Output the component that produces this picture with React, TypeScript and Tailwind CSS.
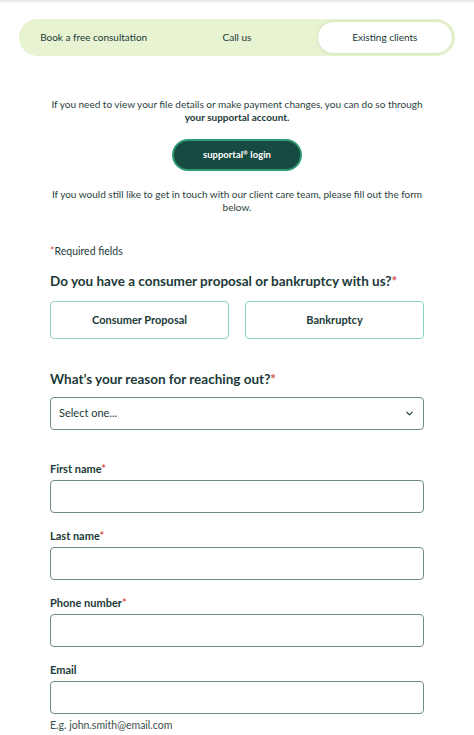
import { ChevronDown } from 'lucide-react'

function Field({ label, required, hint }: { label: string; required?: boolean; hint?: string }) {
  return (
    <div className="flex flex-col">
      <label className="text-[11px] font-bold text-[#1b3a39] leading-[14px] mb-[4px]">
        {label}
        {required && <span className="text-[#d9534f]">*</span>}
      </label>
      <input className="h-[33px] w-full rounded-[4px] border border-[#6f8c88] bg-white outline-none" />
      {hint && <div className="mt-[5px] text-[10.5px] leading-[12px] text-[#3c4f4d]">{hint}</div>}
    </div>
  )
}

export default function App() {
  return (
    <div
      className="min-h-[735px] w-[474px] bg-white text-[#1b3a39]"
      style={{ fontFamily: 'Lato, "Noto Sans", sans-serif' }}
    >
      <div className="h-[3px] bg-gradient-to-b from-[#e2e2e2] to-white" />

      {/* Tabs */}
      <div className="px-[19px] pt-[16px]">
        <div className="grid h-[37px] grid-cols-3 items-center rounded-full bg-[#e8f3d1] px-[3px]">
          <div className="text-center text-[10px]">Book a free consultation</div>
          <div className="text-center text-[10px]">Call us</div>
          <div className="ml-[9px] flex h-[31px] items-center justify-center rounded-full bg-white text-[10px] shadow-[0_0_3px_rgba(180,200,140,0.7)]">
            Existing clients
          </div>
        </div>
      </div>

      <div className="mt-[42px] px-[50px] text-center text-[10px] leading-[13px] text-[#2a3f3e]">
        If you need to view your file details or make payment changes, you can do so through{' '}
        <span className="font-bold text-[#1b3a39]">your supportal account.</span>
      </div>

      <div className="mt-[15px] flex justify-center">
        <button className="h-[32px] w-[130px] rounded-full border-2 border-[#2f9a73] bg-[#174a40] text-[9.5px] font-bold text-white">
          supportal<sup className="text-[6px]">®</sup> login
        </button>
      </div>

      <div className="mt-[17px] px-[46px] text-center text-[10px] leading-[13px] text-[#2a3f3e]">
        If you would still like to get in touch with our client care team, please fill out the form below.
      </div>

      <div className="px-[50px]">
        <div className="mt-[31px] text-[10.5px] leading-[12px]">
          <span className="text-[#d9534f]">*</span>Required fields
        </div>

        <h2 className="mt-[15px] text-[13.5px] font-bold leading-[18px]">
          Do you have a consumer proposal or bankruptcy with us?<span className="text-[#d9534f]">*</span>
        </h2>

        <div className="mt-[11px] grid grid-cols-2 gap-[16px]">
          <button className="h-[38px] rounded-[4px] border border-[#8ad6be] text-[11px] font-bold">
            Consumer Proposal
          </button>
          <button className="h-[38px] rounded-[4px] border border-[#8ad6be] text-[11px] font-bold">
            Bankruptcy
          </button>
        </div>

        <h2 className="mt-[31px] text-[13.5px] font-bold leading-[18px]">
          What’s your reason for reaching out?<span className="text-[#d9534f]">*</span>
        </h2>

        <div className="mt-[9px] flex h-[33px] items-center justify-between rounded-[4px] border border-[#6f8c88] pl-[8px] pr-[8px]">
          <span className="text-[11px]">Select one...</span>
          <ChevronDown size={11} strokeWidth={2.5} />
        </div>

        <div className="mt-[32px] flex flex-col gap-[16px]">
          <Field label="First name" required />
          <Field label="Last name" required />
          <Field label="Phone number" required />
          <Field label="Email" hint="E.g. john.smith@email.com" />
        </div>
      </div>
    </div>
  )
}
